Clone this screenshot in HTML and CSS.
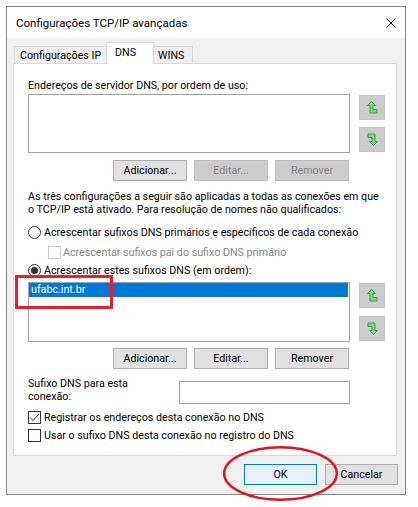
FILE: index.html
```html
<!DOCTYPE html>
<html lang="pt-BR">
<head>
<meta charset="utf-8">
<title>Configurações TCP/IP avançadas</title>
<link rel="stylesheet" href="styles.css">
</head>
<body>
<div class="window">
  <div class="titlebar">
    <span class="title">Configurações TCP/IP avançadas</span>
    <svg class="close" width="10" height="10" viewBox="0 0 10 10"><path d="M0.5 0.5 L9.5 9.5 M9.5 0.5 L0.5 9.5" stroke="#000" stroke-width="1"/></svg>
  </div>
  <div class="client">
    <div class="tabs">
      <div class="tab tab-ip">Configurações IP</div>
      <div class="tab tab-dns active">DNS</div>
      <div class="tab tab-wins">WINS</div>
    </div>
    <div class="panel">
      <div class="label top-label">Endereços de servidor DNS, por ordem de uso:</div>
      <div class="list-row">
        <div class="listbox"></div>
        <div class="arrows">
          <div class="arrow"><svg width="11" height="13" viewBox="0 0 11 13"><polygon points="4.5,0.5 8.5,4.5 6,4.5 6,8.5 10,8.5 10,12 3,12 3,4.5 0.5,4.5" fill="#7ad97a" stroke="#3f9f3f" stroke-width="1"/></svg></div>
          <div class="arrow"><svg width="11" height="13" viewBox="0 0 11 13"><polygon points="4.5,0.5 8.5,4.5 6,4.5 6,8.5 10,8.5 10,12 3,12 3,4.5 0.5,4.5" fill="#7ad97a" stroke="#3f9f3f" stroke-width="1" transform="rotate(180 5.5 6.5)"/></svg></div>
        </div>
      </div>
      <div class="btn-row">
        <div class="btn">Adicionar...</div>
        <div class="btn disabled">Editar...</div>
        <div class="btn disabled">Remover</div>
      </div>
      <p class="para">As três configurações a seguir são aplicadas a todas as conexões em que<br>o TCP/IP está ativado. Para resolução de nomes não qualificados:</p>
      <div class="option opt-1"><span class="radio"></span>Acrescentar sufixos DNS primários e específicos de cada conexão</div>
      <div class="option opt-2 sub disabled"><span class="check off"></span>Acrescentar sufixos pai do sufixo DNS primário</div>
      <div class="option opt-3"><span class="radio checked"></span>Acrescentar estes sufixos DNS (em ordem):</div>
      <div class="list-row second">
        <div class="listbox tall"><div class="item selected">ufabc.int.br</div></div>
        <div class="arrows">
          <div class="arrow"><svg width="11" height="13" viewBox="0 0 11 13"><polygon points="4.5,0.5 8.5,4.5 6,4.5 6,8.5 10,8.5 10,12 3,12 3,4.5 0.5,4.5" fill="#7ad97a" stroke="#3f9f3f" stroke-width="1"/></svg></div>
          <div class="arrow"><svg width="11" height="13" viewBox="0 0 11 13"><polygon points="4.5,0.5 8.5,4.5 6,4.5 6,8.5 10,8.5 10,12 3,12 3,4.5 0.5,4.5" fill="#7ad97a" stroke="#3f9f3f" stroke-width="1" transform="rotate(180 5.5 6.5)"/></svg></div>
        </div>
      </div>
      <div class="btn-row second">
        <div class="btn">Adicionar...</div>
        <div class="btn">Editar...</div>
        <div class="btn">Remover</div>
      </div>
      <div class="suffix-row">
        <div class="suffix-label">Sufixo DNS para esta<br>conexão:</div>
        <div class="textbox"></div>
      </div>
      <div class="option opt-4"><span class="check"><svg width="11" height="11" viewBox="0 0 11 11"><polyline points="1,5.5 4,8.5 10,2" fill="none" stroke="#333" stroke-width="1"/></svg></span>Registrar os endereços desta conexão no DNS</div>
      <div class="option opt-5"><span class="check"></span>Usar o sufixo DNS desta conexão no registro do DNS</div>
    </div>
    <div class="footer">
      <div class="btn default">OK</div>
      <div class="btn">Cancelar</div>
    </div>
  </div>
</div>
<svg class="annot" width="418" height="507" viewBox="0 0 418 507">
  <rect x="16.5" y="276.5" width="95" height="31" fill="none" stroke="#e8202a" stroke-width="3"/>
  <ellipse cx="280.5" cy="473.5" rx="56.3" ry="26.3" fill="none" stroke="#e0161f" stroke-width="2.5"/>
</svg>
</body>
</html>
```

FILE: styles.css
```css
* { box-sizing: border-box; }
html, body { margin: 0; padding: 0; }
body {
  position: relative;
  width: 418px;
  height: 507px;
  background: #fff;
  font-family: Roboto, "Noto Sans", sans-serif;
  font-size: 10.7px;
  color: #000;
  overflow: hidden;
}
.window {
  margin: 6px 0 0 6px;
  width: 400px;
  height: 489px;
  border: 1px solid #868686;
  background: #f0f0f0;
  display: flex;
  flex-direction: column;
}
.titlebar {
  height: 31px;
  flex: none;
  background: #fff;
  display: flex;
  align-items: center;
  justify-content: space-between;
  padding: 0 9px 0 9px;
}
.title { font-size: 11.5px; }
.close { display: block; margin-right: 0; }
.client {
  flex: 1;
  padding: 4px 8px 0 6px;
  display: flex;
  flex-direction: column;
}
.tabs {
  display: flex;
  align-items: flex-end;
  height: 21px;
  padding-left: 1px;
}
.tab {
  height: 17px;
  border: 1px solid #d9d9d9;
  border-bottom: none;
  background: #f0f0f0;
  display: flex;
  align-items: center;
  line-height: 13px;
}
.tab-ip { width: 92px; padding-left: 5px; border-right: none; }
.tab-dns { width: 48px; padding-left: 8px; }
.tab-wins { width: 39px; padding-left: 4px; border-left: none; }
.tab.active {
  height: 22px;
  margin-bottom: -1px;
  background: #fff;
  position: relative;
  z-index: 1;
  padding-bottom: 3px;
}
.panel {
  width: 384px;
  height: 393px;
  flex: none;
  background: #fff;
  border: 1px solid #d9d9d9;
  padding-left: 14px;
  display: flex;
  flex-direction: column;
}
.label, .para, .option, .suffix-label { line-height: 13px; white-space: nowrap; }
.top-label { margin-top: 15px; }
.list-row { display: flex; margin-top: 2px; }
.list-row.second { margin-top: 5px; }
.listbox {
  width: 322px;
  height: 59px;
  border: 1px solid #a0a0a0;
  background: #fff;
}
.listbox.tall { height: 60px; }
.item { height: 14px; line-height: 14px; padding-left: 2px; margin-right: 1px; }
.item.selected { background: #0078d7; color: #fff; }
.arrows {
  margin-left: 9px;
  padding-top: 1px;
  display: flex;
  flex-direction: column;
  gap: 7px;
}
.list-row.second .arrows { gap: 8px; }
.arrow {
  width: 26px;
  height: 25px;
  background: #cccccc;
  border: 1px solid #c4c4c4;
  display: flex;
  align-items: center;
  justify-content: center;
}
.arrow svg { display: block; }
.btn-row {
  display: flex;
  gap: 7px;
  margin-top: 7px;
  padding-left: 85px;
}
.btn-row.second { margin-top: 6px; }
.btn {
  width: 74px;
  height: 21px;
  background: #e1e1e1;
  border: 1px solid #adadad;
  display: flex;
  align-items: center;
  justify-content: center;
  line-height: 13px;
}
.btn.disabled { background: #cccccc; border-color: #bfbfbf; color: #838383; }
.para { margin: 9px 0 0 0; }
.option { display: flex; align-items: center; height: 14px; }
.opt-1 { margin-top: 9px; }
.opt-2 { margin-top: 6px; padding-left: 20px; }
.opt-3 { margin-top: 4px; }
.opt-4 { margin-top: 6px; }
.opt-5 { margin-top: 4px; }
.option.disabled { color: #838383; }
.radio {
  width: 13px;
  height: 13px;
  border: 1px solid #333;
  border-radius: 50%;
  background: #fff;
  margin-right: 3px;
  display: flex;
  align-items: center;
  justify-content: center;
  flex: none;
}
.radio.checked::after {
  content: "";
  width: 7px;
  height: 7px;
  border-radius: 50%;
  background: #333;
}
.check {
  width: 13px;
  height: 13px;
  border: 1px solid #333;
  background: #fff;
  margin-right: 3px;
  display: flex;
  align-items: center;
  justify-content: center;
  flex: none;
}
.check svg { display: block; }
.check.off { border-color: #cccccc; margin-right: 2px; }
.suffix-row { display: flex; margin-top: 8px; }
.suffix-label { width: 151px; }
.textbox {
  margin-top: 4px;
  width: 171px;
  height: 23px;
  border: 1px solid #a0a0a0;
  background: #fff;
}
.footer {
  display: flex;
  justify-content: flex-end;
  gap: 8px;
  margin-top: 8px;
  margin-right: -1px;
}
.footer .btn { width: 73px; }
.btn.default { background: #e5f1fb; border-color: #0078d7; }
.annot { position: absolute; left: 0; top: 0; pointer-events: none; }
```
